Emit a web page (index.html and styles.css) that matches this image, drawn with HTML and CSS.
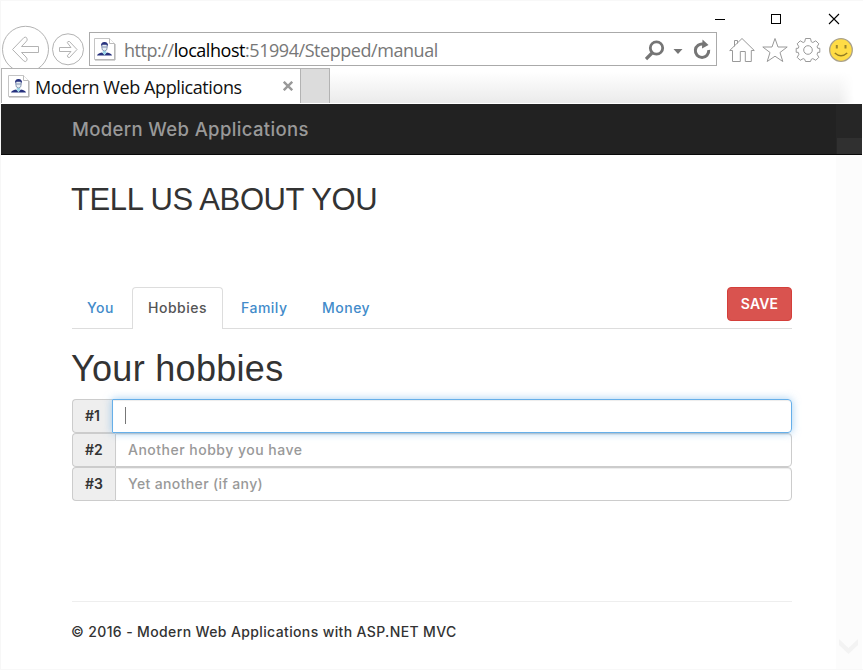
FILE: index.html
```html
<!DOCTYPE html>
<html lang="en">
<head>
<meta charset="utf-8">
<title>Modern Web Applications</title>
<link rel="stylesheet" href="styles.css">
</head>
<body>
<svg class="defs" width="0" height="0">
  <symbol id="person" viewBox="0 0 24 25">
    <path d="M1.500 1.500h15l5 5v16h-20z" fill="#fff" stroke="#c4c4c4"/>
    <path d="M2 23h20V7" fill="none" stroke="#aaa" stroke-width="1"/>
    <path d="M16.500 1.500v5h5" fill="#fff" stroke="#bbb"/>
    <path d="M4 18.500q.5-2 5-3l2.500 2 2.500-2q4.500 1 5 3z" fill="#27327e"/>
    <path d="M9.700 14h3.500v2l-1.700 2.500-1.800-2.500z" fill="#9fd8e8"/>
    <ellipse cx="11.500" cy="10" rx="2.800" ry="4" fill="#e6eef4" stroke="#7889a8" stroke-width=".8"/>
    <path d="M8 9.500q-.5-4.500 3.500-4.500T15 9.500l-1-1.700H9z" fill="#27327e"/>
    <path d="M9 10h5" stroke="#66749c" stroke-width=".8"/>
  </symbol>
</svg>
<div class="browser">
  <div class="titlebar">
    <svg width="126" height="25" viewBox="715 0 126 25" fill="none" stroke="#000" shape-rendering="crispEdges">
      <path d="M715 19.500h10"/><rect x="771.500" y="14.500" width="9" height="9"/>
      <path d="M829 14l10 10M839 14l-10 10" shape-rendering="auto" stroke-width="1.100"/>
    </svg>
  </div>
  <div class="toolbar">
    <svg class="nav" width="88" height="43" viewBox="1 25 88 43" fill="#fff" stroke="#b3b3b3">
      <circle cx="25.500" cy="49.300" r="23"/>
      <path d="M12.500 49.500L24 37.500q2-1 3 .8t-1.200 3.700L21.500 46.500h17v6h-17l4.500 4.500q2 2 .7 3.700t-3 .2z"/>
      <circle cx="68" cy="49.300" r="15.500"/>
      <path d="M77 49.500l-7.500-8q-2-.5-2.200 1.200l3.700 4.800H59.500v4H71l-3.700 4.300q.2 2 2.200 1.700z"/>
    </svg>
    <div class="address">
      <svg class="favicon" width="24" height="25"><use href="#person"/></svg>
      <span class="url">http://<b>localhost</b>:51994/Stepped/manual</span>
      <svg class="address-icons" width="66" height="24" viewBox="644 38 66 24" fill="none" stroke="#757575">
        <circle cx="655.500" cy="47" r="6.200" stroke-width="2.800"/><path d="M651.500 51.500l-6.500 6.500" stroke-width="3.200"/>
        <path d="M672.500 48h9l-4.500 5z" fill="#757575" stroke="none"/>
        <path d="M702.500 43.200A6.700 6.700 0 1 0 707.700 49" stroke-width="3"/><path d="M701.500 38.500l6 5.500-6.500 3.500z" fill="#757575" stroke="none"/>
      </svg>
    </div>
    <svg class="tools" width="126" height="28" viewBox="728 36 126 28" fill="#fff" stroke="#999">
      <path d="M732.500 50.500h-2.800l12.300-12 12.300 12h-3v11h-6v-10h-5v10h-7.800zM734.500 46.500v-6h3v3"/>
      <path d="M775 38.500l3 8.500h9.200l-7.200 5.500 2.800 9-7.800-5.300-7.800 5.300 2.800-9-7.200-5.500h9.200z"/>
      <path d="M805.500 38.500h5l.8 3.300 1.500.7 3-1.700 3 3-1.700 3 .7 1.500h2v4h-2l-.7 2 1.700 3-3 3-3-1.700-1.500.7-.8 2.200h-5l-.8-2.200-1.500-.7-3 1.700-3-3 1.700-3-.7-2h-2v-4h2l.7-1.500-1.700-3 3-3 3 1.700 1.500-.7z"/>
      <circle cx="808" cy="50" r="4.300"/>
      <circle cx="841" cy="50" r="11.300" fill="#ffdc45" stroke="#aaa18a" stroke-width="1.300"/>
      <path d="M836.800 45v3.500M845.500 45v3.500" stroke="#9b842a" stroke-width="2"/><path d="M834.800 53q6.200 5.500 12.400 0" fill="none" stroke="#937c22" stroke-width="1.500"/>
    </svg>
  </div>
  <div class="tabstrip">
    <div class="browser-tab">
      <svg width="24" height="25"><use href="#person"/></svg>
      <span class="tab-title">Modern Web Applications</span>
      <svg width="10" height="10" viewBox="0 0 10 10" stroke="#999" stroke-width="2.400"><path d="M.8.8l8.400 8.400M9.200.8L.8 9.200"/></svg>
    </div>
    <div class="new-tab"></div>
    <div class="strip-fill"></div>
  </div>
  <div class="viewport">
    <div class="page">
      <header class="navbar"><span class="brand">Modern Web Applications</span></header>
      <main class="container">
        <h2><span>TELL US ABOUT YOU</span></h2>
        <div class="tabs">
          <span class="tab you">You</span>
          <span class="tab active">Hobbies</span>
          <span class="tab family">Family</span>
          <span class="tab money">Money</span>
          <button class="save">SAVE</button>
        </div>
        <h1><span>Your hobbies</span></h1>
        <div class="group focused"><span class="addon">#1</span><div class="field"><i class="caret"></i></div></div>
        <div class="group"><span class="addon">#2</span><div class="field"><span class="ph2">Another hobby you have</span></div></div>
        <div class="group"><span class="addon">#3</span><div class="field"><span class="ph3">Yet another (if any)</span></div></div>
        <footer><span>© 2016 - Modern Web Applications with ASP.NET MVC</span></footer>
      </main>
    </div>
    <div class="scrollbar">
      <div class="scroll-top"><div class="thumb"></div></div>
      <svg width="25" height="37" viewBox="0 0 25 37"><path d="M3 7l9.500 9L22 7v6l-9.500 9L3 13z" fill="#f3f3f3"/></svg>
    </div>
  </div>
</div>
</body>
</html>
```
FILE: styles.css
```css
* { box-sizing: border-box; }
body { margin: 0; background: #fff; color: #333; font: 500 14px/20px Inter, "Open Sans", sans-serif; overflow: hidden; }
svg { display: block; flex: none; }
.defs { position: absolute; }
span { white-space: nowrap; }
.browser { width: 863px; height: 670px; padding-right: 1px; border-left: 1px solid #f7f7f7; border-top: 1px solid #f8f8f8; border-bottom: 1px solid #f8f8f8; display: flex; flex-direction: column; background: #fff; }
.titlebar { height: 24px; display: flex; justify-content: flex-end; padding-right: 21px; }
.titlebar svg { margin-top: -1px; }
.toolbar { height: 43px; display: flex; }
.address { width: 628px; height: 34px; margin-top: 7px; border: 1px solid #aaa; display: flex; align-items: center; padding: 0 5px 0 3px; }
.address-icons { margin-top: 3px; }
.url { flex: 1; margin-left: 7px; padding-top: 2px; font: 400 18px/30px "Open Sans", sans-serif; color: #777; letter-spacing: -.45px; }
.url b { font-weight: 400; color: #000; }
.tools { margin: 11px 0 0 11px; }
.tabstrip { height: 36px; display: flex; padding-bottom: 1px; }
.browser-tab { width: 300px; border: 1px solid #b3b3b3; border-bottom: 0; display: flex; align-items: center; padding: 0 7px 0 5px; }
.tab-title { flex: 1; margin-left: 4px; font: 400 18px/30px "Open Sans", sans-serif; color: #111; padding-top: 2px; letter-spacing: -.41px; }
.new-tab { width: 29px; background: #dcdcdc; border: 1px solid #b3b3b3; border-left: 0; border-bottom: 0; }
.strip-fill { flex: 1; margin-right: 8px; background: linear-gradient(#fff 10%, #ebebeb); -webkit-mask-image: linear-gradient(90deg, #000 97%, transparent); mask-image: linear-gradient(90deg, #000 97%, transparent); }
.viewport { flex: 1; display: flex; }
.page { width: 835px; }
.navbar { height: 51px; background: #222; border-bottom: 1px solid #080808; padding: 15px 0 0 71px; }
.brand { font-size: 18.5px; color: #999; letter-spacing: .36px; }
.container { width: 720px; margin-left: 71px; }
h1, h2 { margin: 0; font-family: "Liberation Sans", sans-serif; font-weight: 400; }
h2 { font-size: 31px; line-height: 34px; padding-top: 28px; height: 132px; letter-spacing: -.4px; }
h2 span { margin-left: -1px; }
.tabs { height: 42px; display: flex; align-items: flex-start; border-bottom: 1px solid #ddd; letter-spacing: .5px; }
.tab { color: #428bca; padding: 10px 15px; margin-right: 2px; height: 42px; border: 1px solid transparent; border-bottom: 0; line-height: 20px; }
.you { width: 58px; padding-left: 14px; }
.tab.active { width: 91px; color: #555; background: #fff; border-color: #ddd; border-radius: 4px 4px 0 0; }
.family { width: 79px; }
.money { width: 81px; }
.save { margin-left: auto; width: 65px; height: 34px; padding: 0; border: 1px solid #d43f3a; border-radius: 4px; background: #d9534f; color: #fff; font: 600 14px/20px Inter, sans-serif; letter-spacing: .2px; }
h1 { font-size: 36px; line-height: 40px; padding-top: 20px; height: 70px; letter-spacing: .3px; }
h1 span { margin-left: -1px; }
.group { height: 34px; display: flex; }
.addon { width: 43px; background: #eee; border: 1px solid #ccc; border-right: 0; border-radius: 4px 0 0 4px; padding: 6px 12px; font-weight: 600; }
.field { flex: 1; border: 1px solid #ccc; border-radius: 0 4px 4px 0; padding: 6px 12px; color: #999; box-shadow: inset 0 1px 1px rgba(0,0,0,.075); }
.ph2 { letter-spacing: .49px; }
.ph3 { letter-spacing: .37px; }
.focused { position: relative; z-index: 1; }
.focused .addon { width: 40px; }
.focused .field { border-color: #66afe9; box-shadow: inset 0 1px 1px rgba(0,0,0,.075), 0 0 8px rgba(102,175,233,.6); }
.caret { display: block; width: 1px; height: 17px; margin-top: 1px; background: #777; }
footer { margin-top: 100px; border-top: 1px solid #eee; padding-top: 20px; letter-spacing: .37px; }
footer span { margin-left: -1px; }
.scrollbar { width: 26px; background: #fcfcfc; display: flex; flex-direction: column; justify-content: space-between; }
.scroll-top { height: 51px; background: #262626; border-bottom: 1px solid #080808; padding: 34px 0 0 1px; }
.thumb { height: 16px; background: #303030; }
```
